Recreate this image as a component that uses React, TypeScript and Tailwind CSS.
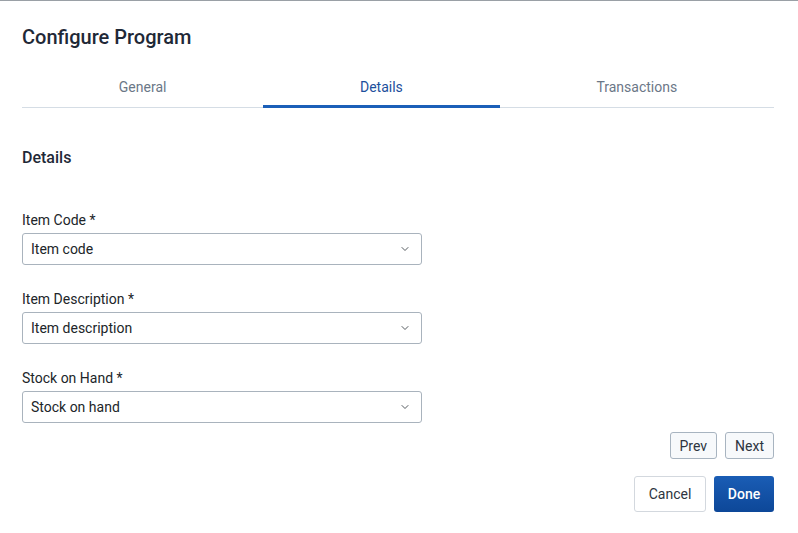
import { ChevronDown } from "lucide-react";

const TABS = ["General", "Details", "Transactions"];

const FIELDS = [
  { label: "Item Code *", value: "Item code" },
  { label: "Item Description *", value: "Item description" },
  { label: "Stock on Hand *", value: "Stock on hand" },
];

function SelectField({ label, value }: { label: string; value: string }) {
  return (
    <div className="flex flex-col">
      <label className="text-sm leading-5 text-[#212529] mb-[3px]">{label}</label>
      <button
        type="button"
        className="w-[400px] h-[32px] flex items-center justify-between pl-[8px] pr-[10px] border border-[#a9b3bd] rounded-[3px] bg-white text-left text-sm text-[#212529]"
      >
        <span>{value}</span>
        <ChevronDown className="w-[12px] h-[12px] text-[#3c4248]" strokeWidth={1.75} />
      </button>
    </div>
  );
}

export default function App() {
  return (
    <div
      className="w-[798px] h-[533px] bg-white border-t border-[#9aa0a6] pl-[22px] pr-[24px] pt-[22px] overflow-hidden"
      style={{ fontFamily: "Roboto, 'Liberation Sans', sans-serif" }}
    >
      <h1 className="text-[20px] leading-7 font-medium text-[#1f2937]">Configure Program</h1>

      {/* tabs */}
      <div className="flex border-b border-[#d5dde5] mt-[26px]">
        {TABS.map((t) => {
          const active = t === "Details";
          return (
            <button
              key={t}
              type="button"
              className={
                "flex-auto pb-2 text-sm leading-5 border-b-[3px] -mb-px " +
                (active
                  ? "border-[#1b5fb8] text-[#1c4f9c]"
                  : "border-transparent text-[#6b7787]")
              }
            >
              {t}
            </button>
          );
        })}
      </div>

      <h2 className="mt-[40px] text-[16px] leading-5 font-medium text-[#1f2937]">Details</h2>

      <div className="mt-[42px] flex flex-col gap-[24px]">
        {FIELDS.map((f) => (
          <SelectField key={f.label} label={f.label} value={f.value} />
        ))}
      </div>

      <div className="mt-[9px] flex justify-end gap-[8px]">
        <button
          type="button"
          className="h-[27px] px-[9px] text-sm text-[#2d3440] bg-[#f7f9fb] border border-[#a8b4c0] rounded-[3px]"
        >
          Prev
        </button>
        <button
          type="button"
          className="h-[27px] px-[9px] text-sm text-[#2d3440] bg-[#f7f9fb] border border-[#a8b4c0] rounded-[3px]"
        >
          Next
        </button>
      </div>

      <div className="mt-[17px] flex justify-end gap-[8px]">
        <button
          type="button"
          className="h-[36px] w-[72px] text-sm text-[#2d3440] bg-white border border-[#d3d8de] rounded-[3px]"
        >
          Cancel
        </button>
        <button
          type="button"
          className="h-[36px] w-[60px] text-sm font-medium text-white bg-gradient-to-b from-[#1a5db5] to-[#0d4798] rounded-[3px]"
        >
          Done
        </button>
      </div>
    </div>
  );
}
